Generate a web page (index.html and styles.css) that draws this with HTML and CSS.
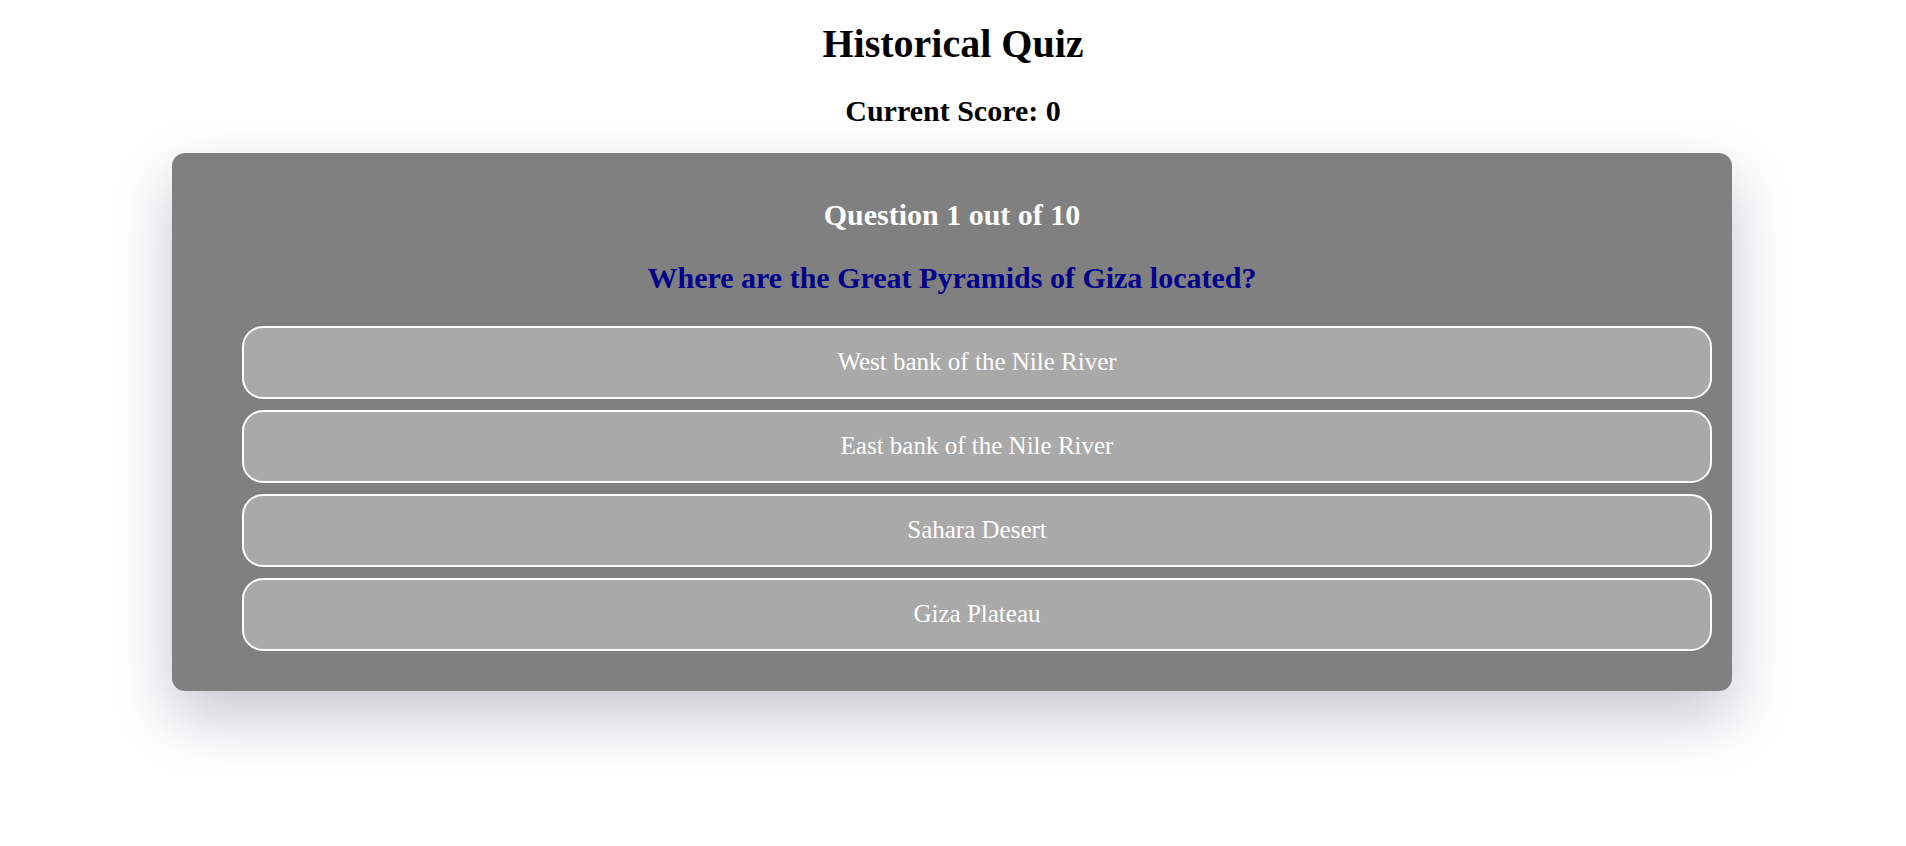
FILE: index.html
```html
<!DOCTYPE html>
<html lang="en">
<head>
<meta charset="utf-8">
<title>Historical Quiz</title>
<link rel="stylesheet" href="styles.css">
</head>
<body>
<main class="page">
  <h1 class="title">Historical Quiz</h1>
  <h2 class="score">Current Score: 0</h2>
  <section class="card">
    <h2 class="counter">Question 1 out of 10</h2>
    <p class="question">Where are the Great Pyramids of Giza located?</p>
    <div class="answers">
      <button class="answer">West bank of the Nile River</button>
      <button class="answer">East bank of the Nile River</button>
      <button class="answer">Sahara Desert</button>
      <button class="answer">Giza Plateau</button>
    </div>
  </section>
</main>
</body>
</html>
```
FILE: styles.css
```css
html, body {
  margin: 0;
  padding: 0;
  background: #ffffff;
}
body {
  font-family: "Liberation Serif", "Times New Roman", serif;
  color: #000;
}
.page {
  box-sizing: border-box;
  min-height: 846px;
  display: flex;
  flex-direction: column;
  align-items: center;
  padding-top: 21px;
  padding-bottom: 100px;
}
.title {
  font-size: 40px;
  font-weight: bold;
  line-height: 46px;
  margin: 0 0 27px;
  text-align: center;
}
.score {
  font-size: 30px;
  font-weight: bold;
  line-height: 34.5px;
  margin: 0 0 24px;
  text-align: center;
}
.card {
  box-sizing: border-box;
  width: 1560px;
  margin-right: 2px;
  background: #808080;
  border-radius: 13px;
  padding: 45px 20px 40px;
  box-shadow: 0 26px 60px rgba(20, 20, 60, 0.24);
  display: flex;
  flex-direction: column;
  align-items: center;
}
.counter {
  font-size: 30px;
  font-weight: bold;
  line-height: 34.5px;
  color: #ffffff;
  margin: 0 0 29px;
  text-align: center;
}
.question {
  font-size: 30px;
  font-weight: bold;
  line-height: 34.5px;
  color: #00008b;
  margin: 0 0 30px;
  text-align: center;
}
.answers {
  align-self: stretch;
  display: flex;
  flex-direction: column;
  gap: 11px;
  padding-left: 50px;
}
.answer {
  box-sizing: border-box;
  height: 73px;
  width: 100%;
  background: #a9a9a9;
  border: 2.5px solid #ffffff;
  border-radius: 21px;
  color: #ffffff;
  font-family: "Liberation Serif", "Times New Roman", serif;
  font-size: 25px;
  line-height: 28.5px;
  padding: 0 20px;
  text-align: center;
  cursor: pointer;
}
```
